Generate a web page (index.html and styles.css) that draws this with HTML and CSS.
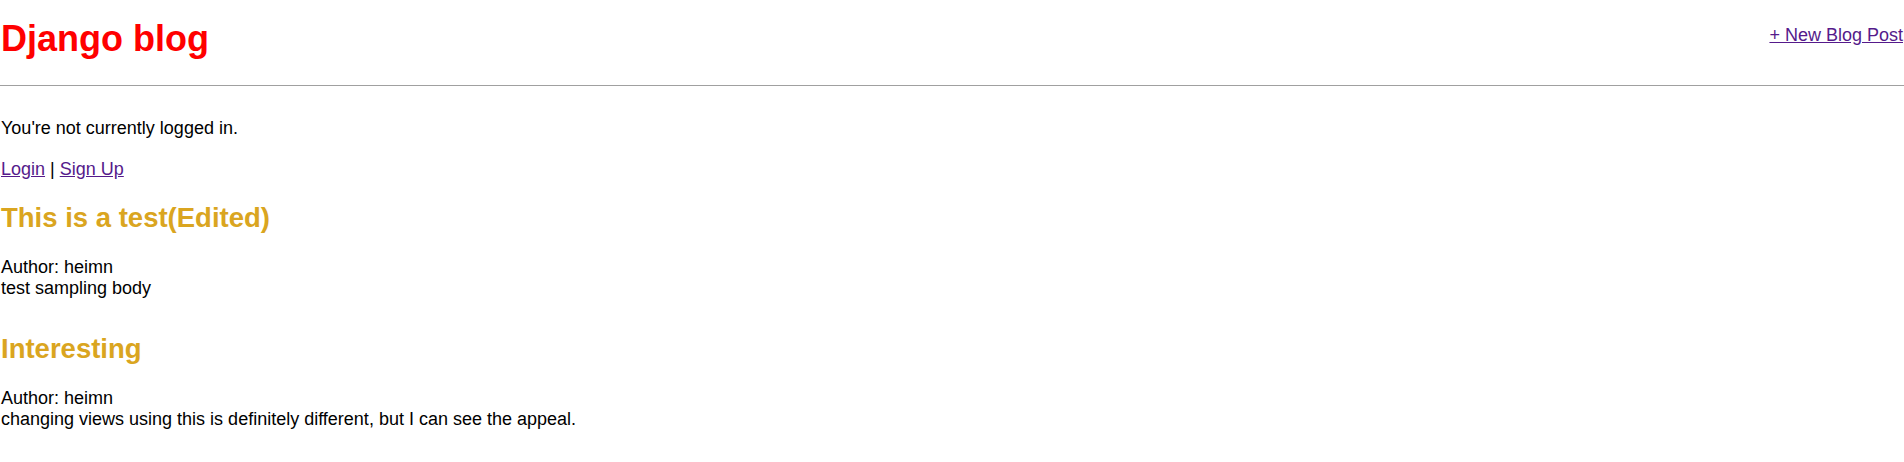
FILE: index.html
```
<!DOCTYPE html>
<html>
<head>
<meta charset="utf-8">
<link rel="stylesheet" href="styles.css">
</head>
<body>
<header class="page-header">
  <h1 class="site-title"><a class="title-link" href="#">Django blog</a></h1>
  <a class="new-post" href="#">+ New Blog Post</a>
</header>
<hr class="divider">
<main class="content">
  <p class="status">You're not currently logged in.</p>
  <p class="auth"><a class="link" href="#">Login</a> | <a class="link" href="#">Sign Up</a></p>
  <article class="post">
    <h2 class="post-title">This is a test(Edited)</h2>
    <p class="post-meta">Author: heimn<br>test sampling body</p>
  </article>
  <article class="post">
    <h2 class="post-title">Interesting</h2>
    <p class="post-meta">Author: heimn<br>changing views using this is definitely different, but I can see the appeal.</p>
  </article>
</main>
</body>
</html>
```
FILE: styles.css
```
html, body {
  margin: 0;
  padding: 0;
  background: #fff;
}
body {
  font-family: "Liberation Sans", Arial, sans-serif;
  font-size: 18px;
  line-height: 21px;
  color: #000;
  padding: 0 1px;
}
.page-header {
  display: flex;
  justify-content: space-between;
  align-items: flex-start;
  height: 85px;
}
.site-title {
  margin: 18px 0 0 0;
  font-size: 36px;
  font-weight: bold;
  line-height: 41px;
}
.title-link {
  color: #ff0000;
  text-decoration: none;
}
.new-post {
  margin-top: 25px;
  color: #551a8b;
  line-height: 21px;
}
.divider {
  margin: 0 -1px;
  border: none;
  border-top: 1px solid #a0a0a0;
  height: 0;
}
.content {
  padding-top: 32px;
}
.status {
  margin: 0 0 20px 0;
}
.auth {
  margin: 0 0 22px 0;
}
.link {
  color: #551a8b;
}
.post-title {
  color: #daa520;
  font-size: 27.5px;
  line-height: 31px;
  margin: 0 0 24px 0;
}
.post-meta {
  margin: 0 0 34px 0;
}
```
